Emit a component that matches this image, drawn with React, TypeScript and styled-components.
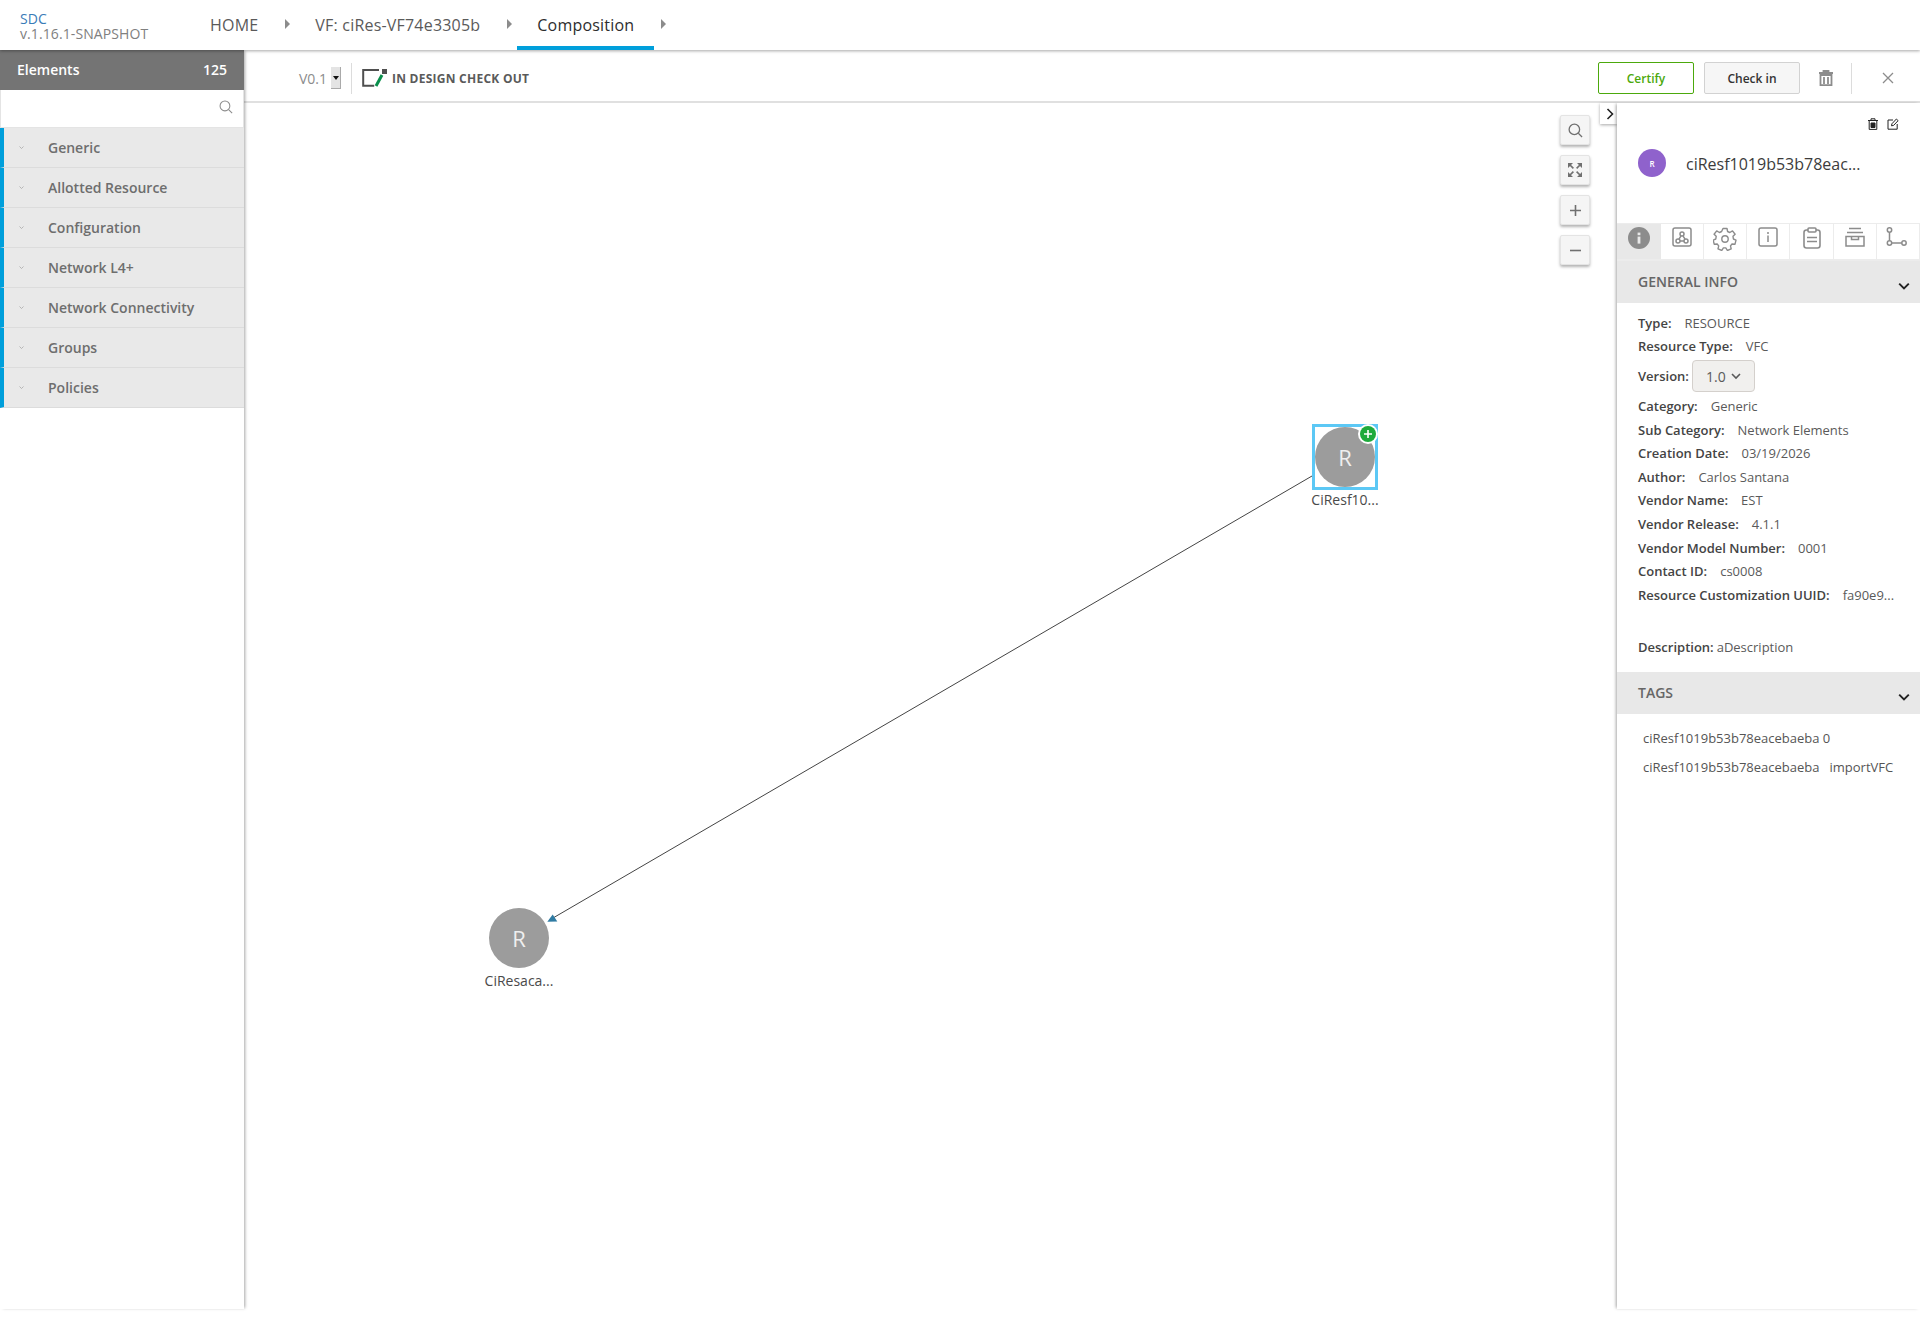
import React from "react";
import styled, { createGlobalStyle } from "styled-components";

const Global = createGlobalStyle`
  html, body { margin: 0; padding: 0; background: #fff; }
  body { font-family: "Open Sans", "Liberation Sans", sans-serif; color: #5a5a5a; }
  * { box-sizing: border-box; }
`;

const Page = styled.div`
  width: 1920px;
  height: 1319px;
  display: flex;
  flex-direction: column;
  overflow: hidden;
  background: #fff;
`;

const Header = styled.header`
  height: 50px;
  flex: none;
  display: flex;
  align-items: stretch;
  padding-left: 20px;
  box-shadow: 0 1px 3px rgba(0, 0, 0, 0.35);
  position: relative;
  z-index: 3;
  background: #fff;
`;

const Brand = styled.div`
  width: 170px;
  padding-top: 11px;
  font-size: 14px;
  line-height: 15px;
  letter-spacing: 0.1px;
  color: #808080;
`;

const BrandName = styled.div`
  color: #3a7cb8;
`;

const Crumb = styled.div<{ $active?: boolean }>`
  position: relative;
  display: flex;
  align-items: center;
  height: 50px;
  padding: 3px 20px 0;
  margin-right: 17px;
  font-size: 16px;
  letter-spacing: 0.2px;
  color: ${(p) => (p.$active ? "#2d2d2d" : "#5a5a5a")};
  border-bottom: 4px solid ${(p) => (p.$active ? "#009fdb" : "transparent")};
  font-weight: 500;
`;

const CrumbArrow = styled.span`
  position: absolute;
  right: -12px;
  top: 19px;
  width: 0;
  height: 0;
  border-left: 5px solid #8c8c8c;
  border-top: 5px solid transparent;
  border-bottom: 5px solid transparent;
`;

const Body = styled.div`
  flex: 1;
  display: flex;
  min-height: 0;
  max-height: 1259px;
`;

const Sidebar = styled.aside`
  width: 244px;
  flex: none;
  display: flex;
  flex-direction: column;
  box-shadow: 2px 0 3px -1px rgba(0, 0, 0, 0.35);
  position: relative;
  z-index: 2;
  background: #fff;
`;

const SideHead = styled.div`
  height: 40px;
  flex: none;
  display: flex;
  justify-content: space-between;
  align-items: center;
  padding: 0 17px 2px;
  background: #747474;
  color: #fff;
  font-size: 14px;
  font-weight: 600;
`;

const SearchBox = styled.div`
  height: 38px;
  flex: none;
  display: flex;
  justify-content: flex-end;
  align-items: center;
  padding: 0 10px 3px 0;
  border: 1px solid #e4e4e4;
  border-top: 0;
  color: #8c8c8c;
`;

const Group = styled.div`
  height: 40px;
  flex: none;
  display: flex;
  align-items: center;
  background: #e9e9e9;
  border-left: 4px solid #009fdb;
  border-bottom: 1px solid #dcdcdc;
  font-size: 14px;
  font-weight: 600;
  color: #6e6e6e;
`;

const GroupCaret = styled.span`
  width: 44px;
  padding-left: 15px;
  display: flex;
  color: #a0a0a0;
`;

const Main = styled.main`
  flex: 1;
  display: flex;
  flex-direction: column;
  min-width: 0;
`;

const Toolbar = styled.div`
  height: 53px;
  flex: none;
  display: flex;
  align-items: center;
  padding: 5px 0 0 55px;
  border-bottom: 2px solid #e0e0e0;
  background: #fff;
`;

const VersionText = styled.span`
  font-size: 14px;
  color: #8c8c8c;
  width: 32px;
  padding-top: 1px;
`;

const VersionStep = styled.span`
  width: 10px;
  height: 22px;
  background: #e4e4e4;
  border-right: 1px solid #aaa;
  border-bottom: 1px solid #aaa;
  display: flex;
  align-items: center;
  justify-content: center;
  margin-right: 10px;
`;

const VDivider = styled.span<{ $gap?: number }>`
  width: 1px;
  height: 31px;
  background: #dcdcdc;
  margin-right: ${(p) => p.$gap ?? 10}px;
`;

const StatusText = styled.span`
  font-size: 12px;
  font-weight: 700;
  letter-spacing: 0.25px;
  color: #5a5a5a;
  margin-left: 5px;
`;

const Spacer = styled.div`
  flex: 1;
`;

const Btn = styled.button<{ $primary?: boolean }>`
  width: 96px;
  height: 32px;
  padding: 0;
  font: 600 12px "Open Sans", sans-serif;
  border-radius: 2px;
  background: ${(p) => (p.$primary ? "#fff" : "#f6f6f6")};
  color: ${(p) => (p.$primary ? "#4ca90c" : "#333")};
  border: 1px solid ${(p) => (p.$primary ? "#4ca90c" : "#d2d2d2")};
  margin-right: ${(p) => (p.$primary ? "10px" : "0")};
`;

const TrashSlot = styled.span`
  width: 51px;
  display: flex;
  justify-content: center;
  color: #8c8c8c;
`;

const CloseSlot = styled.span`
  width: 68px;
  padding-left: 4px;
  display: flex;
  justify-content: center;
  color: #8c8c8c;
`;

const Work = styled.div`
  flex: 1;
  display: flex;
  min-height: 0;
`;

const Canvas = styled.div`
  flex: 1;
  position: relative;
  background: #fff;
`;

const Edges = styled.svg`
  position: absolute;
  inset: 0;
  width: 100%;
  height: 100%;
`;

const ZoomStack = styled.div`
  position: absolute;
  top: 12px;
  right: 27px;
  display: flex;
  flex-direction: column;
  gap: 10px;
`;

const ZoomBtn = styled.div`
  width: 30px;
  height: 30px;
  display: flex;
  align-items: center;
  justify-content: center;
  background: #f5f5f5;
  border: 1px solid #e4e4e4;
  border-radius: 2px;
  box-shadow: 0 2px 3px rgba(0, 0, 0, 0.3);
  color: #707070;
`;

const CollapseTab = styled.div`
  position: absolute;
  top: 0;
  right: 0;
  width: 17px;
  height: 21px;
  padding-left: 3px;
  display: flex;
  align-items: center;
  justify-content: center;
  background: #fff;
  box-shadow: 0 1px 3px rgba(0, 0, 0, 0.35);
  color: #222;
`;

const Node = styled.div<{ $x: number; $y: number }>`
  position: absolute;
  left: ${(p) => p.$x}px;
  top: ${(p) => p.$y}px;
  width: 80px;
  display: flex;
  flex-direction: column;
  align-items: center;
  font-size: 14px;
  color: #4a4a4a;
`;

const NodeFrame = styled.div<{ $selected?: boolean }>`
  position: relative;
  width: 66px;
  height: 66px;
  border: 3px solid ${(p) => (p.$selected ? "#5cc8f5" : "transparent")};
`;

const NodeCircle = styled.div`
  width: 60px;
  height: 60px;
  border-radius: 50%;
  background: #9c9c9c;
  color: #efefef;
  display: flex;
  align-items: center;
  justify-content: center;
  font-size: 22px;
`;

const AddBadge = styled.span`
  position: absolute;
  top: -1px;
  right: -1px;
  width: 16px;
  height: 16px;
  border-radius: 50%;
  background: #1eaa3c;
  box-shadow: 0 0 0 2px #fff;
  color: #fff;
  display: flex;
  align-items: center;
  justify-content: center;
`;

const NodeLabel = styled.span`
  line-height: 19px;
`;

const Panel = styled.aside`
  width: 303px;
  flex: none;
  position: relative;
  background: #fff;
  box-shadow: -2px 0 3px -1px rgba(0, 0, 0, 0.35);
  display: flex;
  flex-direction: column;
`;

const PanelActions = styled.div`
  height: 30px;
  padding: 15px 21px 0 0;
  display: flex;
  justify-content: flex-end;
  gap: 8px;
  color: #222;
`;

const PanelTitle = styled.div`
  height: 90px;
  display: flex;
  padding: 16px 0 0 21px;
  align-items: flex-start;
`;

const Avatar = styled.div`
  width: 28px;
  height: 28px;
  border-radius: 50%;
  background: #8f62cc;
  color: #fff;
  font-size: 8px;
  font-weight: 600;
  display: flex;
  align-items: center;
  justify-content: center;
`;

const PanelName = styled.div`
  margin: 1px 0 0 20px;
  font-size: 16px;
  line-height: 28px;
  white-space: nowrap;
  color: #3c3c3c;
`;

const TabBar = styled.div`
  height: 38px;
  flex: none;
  display: flex;
  border-top: 1px solid #ececec;
  border-bottom: 2px solid #ececec;
`;

const TabItem = styled.div<{ $active?: boolean }>`
  width: ${(p) => (p.$active ? "44px" : "43.4px")};
  display: flex;
  align-items: flex-start;
  padding-top: 3px;
  justify-content: center;
  color: #8c8c8c;
  background: ${(p) => (p.$active ? "#e8e8e8" : "#fff")};
  border-right: ${(p) => (p.$active ? "0" : "1px solid #ececec")};
`;

const SectionHead = styled.div`
  height: 42px;
  flex: none;
  display: flex;
  justify-content: space-between;
  padding: 11px 10px 0 21px;
  background: #e8e8e8;
  font-size: 14px;
  font-weight: 600;
  color: #666;
  line-height: 20px;
`;

const SectionCaret = styled.span`
  margin-top: 8px;
  display: flex;
  color: #222;
`;

const Info = styled.div`
  height: 369px;
  flex: none;
  padding: 8px 10px 0 21px;
  font-size: 13px;
  color: #5a5a5a;
`;

const InfoRow = styled.div<{ $h?: number }>`
  height: ${(p) => p.$h ?? 23.6}px;
  display: flex;
  align-items: center;
  white-space: nowrap;
`;

const Label = styled.b<{ $gap?: number }>`
  font-weight: 600;
  color: #444;
  margin-right: ${(p) => p.$gap ?? 13}px;
`;

const VersionSelect = styled.div`
  width: 63px;
  height: 32px;
  display: flex;
  align-items: center;
  justify-content: center;
  gap: 5px;
  border: 1px solid #d4d0cc;
  border-radius: 4px;
  background: #f1f0ee;
  font-size: 14px;
  color: #5a5a5a;
`;

const Tags = styled.div`
  padding: 10px 0 0 26px;
  font-size: 13px;
  color: #555;
  line-height: 29px;
`;

const TagLine = styled.div`
  display: flex;
  gap: 10px;
  white-space: nowrap;
`;

const Chevron = ({ s = 10, w = 2 }: { s?: number; w?: number }) => (
  <svg width={s} height={s} viewBox="0 0 10 10" fill="none" stroke="currentColor" strokeWidth={w}>
    <path d="M1 3l4 4 4-4" />
  </svg>
);

const Search = ({ s = 14, w = 1.2 }: { s?: number; w?: number }) => (
  <svg width={s} height={s} viewBox="0 0 16 16" fill="none" stroke="currentColor" strokeWidth={w}>
    <circle cx="6.8" cy="6.8" r="5.6" />
    <path d="M11 11l4 4" />
  </svg>
);

const Trash = () => (
  <svg width="14" height="16" viewBox="0 0 14 16" fill="none" stroke="currentColor" strokeWidth="1.8">
    <path d="M0 3h14M4.5 2.5V1h5v1.5" />
    <path d="M1.5 5h11v10.2h-11zM5 7v7M9 7v7" />
  </svg>
);

const TinyTrash = () => (
  <svg width="12" height="12" viewBox="0 0 12 12" fill="none" stroke="currentColor" strokeWidth="1">
    <path d="M1 2.5h10M4 2V.8h4V2M2.2 3v8.4h7.6V3" />
    <path d="M4 5h4v4.5H4z" fill="currentColor" />
  </svg>
);

const TinyEdit = () => (
  <svg width="12" height="12" viewBox="0 0 12 12" fill="none" stroke="currentColor" strokeWidth="1">
    <path d="M6 2H1v9.2h9.2V6" />
    <path d="M4.5 7.8l.4-2L9.4 1l1.7 1.7-4.5 4.7z" />
  </svg>
);

const ExpandIcon = () => (
  <svg width="14" height="14" viewBox="0 0 14 14" fill="currentColor">
    <path d="M0 0h5L0 5zM14 0v5L9 0zM0 14V9l5 5zM14 14H9l5-5z" />
    <path d="M2 2l3.4 3.4M12 2L8.6 5.4M2 12l3.4-3.4M12 12L8.6 8.6" stroke="currentColor" strokeWidth="1.6" />
  </svg>
);

const InfoFilled = () => (
  <svg width="22" height="22" viewBox="0 0 22 22">
    <circle cx="11" cy="11" r="11" fill="#8c8c8c" />
    <rect x="9.6" y="9.6" width="2.8" height="7" fill="#e8e8e8" />
    <rect x="9.6" y="5.6" width="2.8" height="2.6" fill="#e8e8e8" />
  </svg>
);

const GraphBox = () => (
  <svg width="20" height="20" viewBox="0 0 20 20" fill="none" stroke="currentColor" strokeWidth="1.5">
    <rect x="1" y="1" width="18" height="18" rx="2" />
    <circle cx="10" cy="7" r="2" />
    <circle cx="6" cy="14" r="2" />
    <circle cx="14" cy="14" r="2" />
    <path d="M9 8.8L7 12.2M11 8.8l2 3.4M8 14h4" />
  </svg>
);

const Gear = () => (
  <svg width="24" height="24" viewBox="0 0 24 24" fill="none" stroke="currentColor" strokeWidth="1.4" strokeLinejoin="round">
    <circle cx="12" cy="12" r="3.2" />
    <path d="M10 1.5h4l.6 3 2.2 1 2.7-1.6 2.6 3.3-2.1 2.1.4 2.7 2.6 1.2-1 4-3-.2-1.5 1.9.7 3-3.8 1.6-1.6-2.6h-2.4l-1.6 2.6-3.8-1.6.7-3-1.5-1.9-3 .2-1-4 2.6-1.2.4-2.7-2.1-2.1 2.6-3.3 2.7 1.6 2.2-1z" />
  </svg>
);

const InfoBox = () => (
  <svg width="20" height="20" viewBox="0 0 20 20" fill="none" stroke="currentColor" strokeWidth="1.5">
    <rect x="1" y="1" width="18" height="18" rx="2" />
    <path d="M10 8.5V15M10 5v2" />
  </svg>
);

const Clipboard = () => (
  <svg width="18" height="22" viewBox="0 0 18 22" fill="none" stroke="currentColor" strokeWidth="1.6">
    <rect x="1" y="3" width="16" height="18" rx="2.5" />
    <rect x="5" y="1" width="8" height="4" rx="1" fill="#fff" />
    <path d="M4 10.5h10M4 14.5h10" />
  </svg>
);

const Archive = () => (
  <svg width="20" height="20" viewBox="0 0 20 20" fill="none" stroke="currentColor" strokeWidth="1.5">
    <path d="M4 1.5h12M2 5.5h16M1 9.5h18v9.5H1zM6.5 9.5v3h7v-3" />
  </svg>
);

const Branch = () => (
  <svg width="24" height="20" viewBox="0 0 24 20" fill="none" stroke="currentColor" strokeWidth="1.5">
    <circle cx="3.5" cy="3" r="2.2" />
    <circle cx="3.5" cy="16" r="2.2" />
    <circle cx="18" cy="16" r="2.2" />
    <path d="M3.5 5.2v8.6M5.7 16h10" />
  </svg>
);

const groups = ["Generic", "Allotted Resource", "Configuration", "Network L4+", "Network Connectivity", "Groups", "Policies"];

const infoRows = [
  { label: "Type:", value: "RESOURCE" },
  { label: "Resource Type:", value: "VFC" },
];

const infoRows2 = [
  { label: "Category:", value: "Generic" },
  { label: "Sub Category:", value: "Network Elements" },
  { label: "Creation Date:", value: "03/19/2026" },
  { label: "Author:", value: "Carlos Santana" },
  { label: "Vendor Name:", value: "EST" },
  { label: "Vendor Release:", value: "4.1.1" },
  { label: "Vendor Model Number:", value: "0001" },
  { label: "Contact ID:", value: "cs0008" },
  { label: "Resource Customization UUID:", value: "fa90e9..." },
];

const tabs = [
  <InfoFilled key="a" />,
  <GraphBox key="b" />,
  <Gear key="c" />,
  <InfoBox key="d" />,
  <Clipboard key="e" />,
  <Archive key="f" />,
  <Branch key="g" />,
];

export default function App() {
  return (
    <Page>
      <Global />
      <Header>
        <Brand>
          <BrandName>SDC</BrandName>
          v.1.16.1-SNAPSHOT
        </Brand>
        <Crumb>
          HOME
          <CrumbArrow />
        </Crumb>
        <Crumb>
          VF: ciRes-VF74e3305b
          <CrumbArrow />
        </Crumb>
        <Crumb $active>
          Composition
          <CrumbArrow />
        </Crumb>
      </Header>
      <Body>
        <Sidebar>
          <SideHead>
            <span>Elements</span>
            <span>125</span>
          </SideHead>
          <SearchBox>
            <Search />
          </SearchBox>
          {groups.map((g) => (
            <Group key={g}>
              <GroupCaret>
                <Chevron s={5} w={1.4} />
              </GroupCaret>
              {g}
            </Group>
          ))}
        </Sidebar>
        <Main>
          <Toolbar>
            <VersionText>V0.1</VersionText>
            <VersionStep>
              <svg width="6" height="4" viewBox="0 0 6 4">
                <path d="M0 0h6L3 4z" fill="#111" />
              </svg>
            </VersionStep>
            <VDivider />
            <svg width="25" height="18" viewBox="0 0 25 18" fill="none">
              <path d="M17 1H1.2v15.8h11" stroke="#4f4f4f" strokeWidth="2" />
              <path d="M14 17L20 6" stroke="#0a8f4c" strokeWidth="3" />
              <rect x="20" y="0" width="5" height="5" fill="#4f4f4f" />
            </svg>
            <StatusText>IN DESIGN CHECK OUT</StatusText>
            <Spacer />
            <Btn $primary>Certify</Btn>
            <Btn>Check in</Btn>
            <TrashSlot>
              <Trash />
            </TrashSlot>
            <VDivider $gap={0} />
            <CloseSlot>
              <svg width="12" height="12" viewBox="0 0 12 12" stroke="currentColor" strokeWidth="1.3">
                <path d="M1 1l10 10M11 1L1 11" />
              </svg>
            </CloseSlot>
          </Toolbar>
          <Work>
            <Canvas>
              <Edges>
                <path d="M1068 373L309 815" stroke="#444" strokeWidth="1" fill="none" />
                <path d="M303.3 818.7l10-.2-4.6-7z" fill="#2f7ba3" />
              </Edges>
              <Node $x={1061} $y={321}>
                <NodeFrame $selected>
                  <NodeCircle>R</NodeCircle>
                  <AddBadge>
                    <svg width="10" height="10" viewBox="0 0 10 10" stroke="#fff" strokeWidth="1.6">
                      <path d="M5 1v8M1 5h8" />
                    </svg>
                  </AddBadge>
                </NodeFrame>
                <NodeLabel>CiResf10...</NodeLabel>
              </Node>
              <Node $x={235} $y={802}>
                <NodeFrame>
                  <NodeCircle>R</NodeCircle>
                </NodeFrame>
                <NodeLabel>CiResaca...</NodeLabel>
              </Node>
              <ZoomStack>
                <ZoomBtn>
                  <Search s={15} w={1.4} />
                </ZoomBtn>
                <ZoomBtn>
                  <ExpandIcon />
                </ZoomBtn>
                <ZoomBtn>
                  <svg width="13" height="13" viewBox="0 0 13 13" stroke="currentColor" strokeWidth="1.6">
                    <path d="M6.5 1v11M1 6.5h11" />
                  </svg>
                </ZoomBtn>
                <ZoomBtn>
                  <svg width="13" height="13" viewBox="0 0 13 13" stroke="currentColor" strokeWidth="1.6">
                    <path d="M1 6.5h11" />
                  </svg>
                </ZoomBtn>
              </ZoomStack>
              <CollapseTab>
                <svg width="8" height="12" viewBox="0 0 8 12" fill="none" stroke="currentColor" strokeWidth="1.6">
                  <path d="M1.5 1l5 5-5 5" />
                </svg>
              </CollapseTab>
            </Canvas>
            <Panel>
              <PanelActions>
                <TinyTrash />
                <TinyEdit />
              </PanelActions>
              <PanelTitle>
                <Avatar>R</Avatar>
                <PanelName>ciResf1019b53b78eac...</PanelName>
              </PanelTitle>
              <TabBar>
                {tabs.map((t, i) => (
                  <TabItem key={i} $active={i === 0}>
                    {t}
                  </TabItem>
                ))}
              </TabBar>
              <SectionHead>
                GENERAL INFO
                <SectionCaret>
                  <Chevron s={12} w={1.6} />
                </SectionCaret>
              </SectionHead>
              <Info>
                {infoRows.map((r) => (
                  <InfoRow key={r.label}>
                    <Label>{r.label}</Label>
                    {r.value}
                  </InfoRow>
                ))}
                <InfoRow $h={36}>
                  <Label $gap={3}>Version:</Label>
                  <VersionSelect>
                    1.0
                    <Chevron s={10} w={1.6} />
                  </VersionSelect>
                </InfoRow>
                {infoRows2.map((r) => (
                  <InfoRow key={r.label}>
                    <Label>{r.label}</Label>
                    {r.value}
                  </InfoRow>
                ))}
                <InfoRow $h={29} />
                <InfoRow>
                  <Label $gap={3}>Description:</Label>
                  aDescription
                </InfoRow>
              </Info>
              <SectionHead>
                TAGS
                <SectionCaret>
                  <Chevron s={12} w={1.6} />
                </SectionCaret>
              </SectionHead>
              <Tags>
                <TagLine>ciResf1019b53b78eacebaeba 0</TagLine>
                <TagLine>
                  <span>ciResf1019b53b78eacebaeba</span>
                  <span>importVFC</span>
                </TagLine>
              </Tags>
            </Panel>
          </Work>
        </Main>
      </Body>
    </Page>
  );
}
